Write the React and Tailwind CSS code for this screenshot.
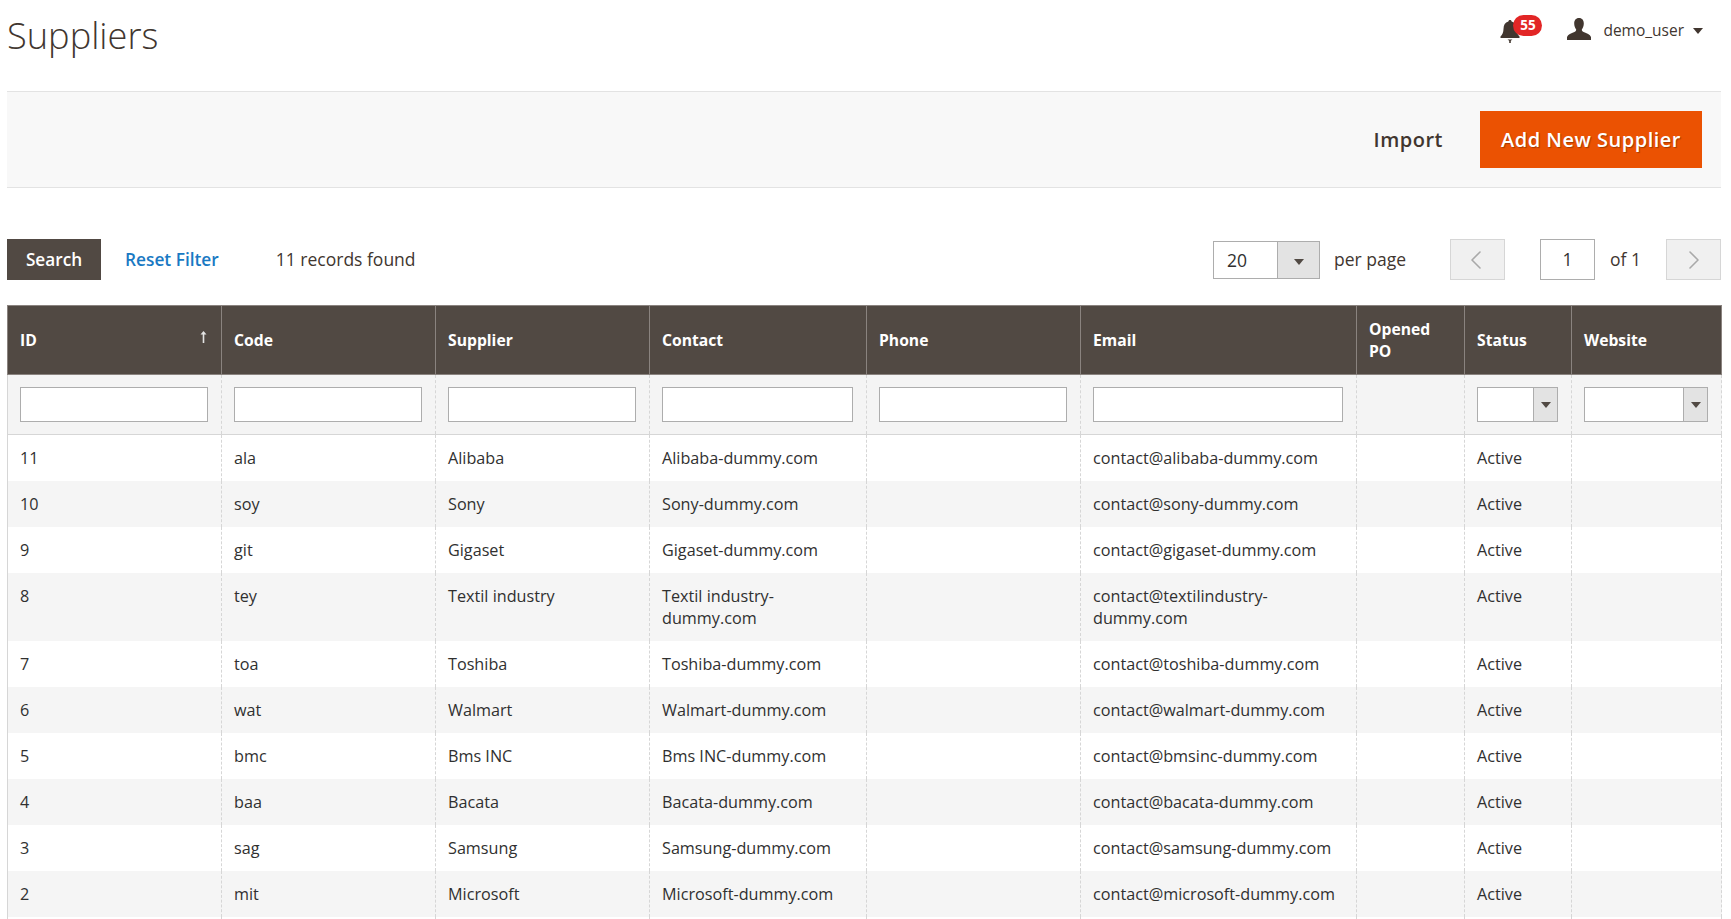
import { ChevronLeft, ChevronRight } from "lucide-react";

const rows = [
  ["11", "ala", "Alibaba", "Alibaba-dummy.com", "contact@alibaba-dummy.com"],
  ["10", "soy", "Sony", "Sony-dummy.com", "contact@sony-dummy.com"],
  ["9", "git", "Gigaset", "Gigaset-dummy.com", "contact@gigaset-dummy.com"],
  ["8", "tey", "Textil industry", "Textil industry-dummy.com", "contact@textilindustry-dummy.com"],
  ["7", "toa", "Toshiba", "Toshiba-dummy.com", "contact@toshiba-dummy.com"],
  ["6", "wat", "Walmart", "Walmart-dummy.com", "contact@walmart-dummy.com"],
  ["5", "bmc", "Bms INC", "Bms INC-dummy.com", "contact@bmsinc-dummy.com"],
  ["4", "baa", "Bacata", "Bacata-dummy.com", "contact@bacata-dummy.com"],
  ["3", "sag", "Samsung", "Samsung-dummy.com", "contact@samsung-dummy.com"],
  ["2", "mit", "Microsoft", "Microsoft-dummy.com", "contact@microsoft-dummy.com"],
];

const headers = ["ID", "Code", "Supplier", "Contact", "Phone", "Email", "Opened PO", "Status", "Website"];

function Caret({ className }) {
  return (
    <svg viewBox="0 0 10 6" className={className} fill="currentColor">
      <path d="M0 0h10L5 6z" />
    </svg>
  );
}

function FilterSelect() {
  return (
    <div className="flex h-[35px] border border-[#adadad] bg-white">
      <div className="flex-1" />
      <div className="flex w-[24px] items-center justify-center border-l border-[#adadad] bg-[#e3e3e3] text-[#514943]">
        <Caret className="h-[6px] w-[10px]" />
      </div>
    </div>
  );
}

function Cell({ children }) {
  return (
    <td className="border-r border-dashed border-[#d6d6d6] px-[12px] py-[12px] align-top leading-[22px]">
      {children}
    </td>
  );
}

export default function App() {
  return (
    <div className="h-screen overflow-hidden bg-white pl-[7px] pr-[10px] font-['Open_Sans',sans-serif] text-[16.2px] text-[#303030]">
      {/* Заголовок */}
      <div className="flex h-[91px] items-start justify-between">
        <h1 className="mt-[11px] text-[36.2px] font-light leading-[48px] text-[#41362f]">Suppliers</h1>
        <div className="mr-[18px] mt-[15px] flex items-center">
          <div className="relative mr-[47px] h-[28px] w-[20px]">
            <svg viewBox="0 0 20 23" className="absolute left-0 top-[5px] h-[23px] w-[20px] fill-[#41362f]">
              <path d="M10 0c1 0 1.600.7 1.600 1.600C15 2.400 16.400 5 16.500 9c.1 3.500 1 5.500 3 7.500V18H.500v-1.500c2-2 2.900-4 3-7.500C3.600 5 5 2.400 8.400 1.600 8.400.7 9 0 10 0z" />
              <path d="M7.500 19.500h5l-1.700 1.200V23H9.200v-2.300z" />
            </svg>
            <span className="absolute left-[13px] top-0 flex h-[21px] w-[29px] items-center justify-center rounded-full bg-[#e22626] text-[13.5px] font-bold leading-none text-white">
              55
            </span>
          </div>
          <svg viewBox="0 0 24 22" className="mr-[12px] h-[22px] w-[24px] fill-[#41362f]">
            <path d="M12 0c3.300 0 4.800 2.500 4.800 5.400 0 2.300-.8 4.500-2 6 0 1.300.5 2 1.800 2.600 3.300 1.400 6.400 2.400 7.400 5V22H0v-3c1-2.600 4.100-3.600 7.400-5 1.300-.6 1.800-1.300 1.800-2.600-1.200-1.500-2-3.700-2-6C7.200 2.500 8.700 0 12 0z" />
          </svg>
          <span className="pt-[4px] text-[15.5px] text-[#41362f]">demo_user</span>
          <Caret className="ml-[9px] mt-[4px] h-[6px] w-[10px] text-[#41362f]" />
        </div>
      </div>

      {/* Панель действий */}
      <div className="flex h-[97px] items-center justify-end border-y border-[#e3e3e3] bg-[#f8f8f8] pr-[19px]">
        <span className="mr-[37px] text-[20px] font-semibold tracking-[0.5px] text-[#41362f]">Import</span>
        <button className="h-[57px] w-[222px] bg-[#eb5202] text-[20px] font-semibold tracking-[0.5px] text-white [text-shadow:1px_1px_1px_rgba(0,0,0,0.3)]">
          Add New Supplier
        </button>
      </div>

      {/* Поиск и пагинация */}
      <div className="mb-[25px] mt-[51px] flex h-[41px] items-center text-[17.5px]">
        <button className="h-[41px] w-[94px] bg-[#514943] text-[17.2px] font-semibold text-white">Search</button>
        <a className="ml-[24px] text-[17.3px] font-semibold text-[#1979c3]">Reset Filter</a>
        <span className="ml-[57px] text-[#41362f]">11 records found</span>
        <div className="ml-auto flex items-center">
          <div className="flex h-[38px] w-[107px] border border-[#adadad]">
            <span className="flex-1 pl-[13px] leading-[36px]">20</span>
            <div className="flex w-[42px] items-center justify-center border-l border-[#adadad] bg-[#e3e3e3] pt-[5px] text-[#514943]">
              <Caret className="h-[6px] w-[10px]" />
            </div>
          </div>
          <span className="ml-[14px] text-[#41362f]">per page</span>
          <button className="ml-[44px] flex h-[41px] w-[55px] items-center justify-center border border-[#d6d6d6] bg-[#f0f0f0] pr-[3px] text-[#a9a9a9]">
            <ChevronLeft size={32} strokeWidth={1.2} />
          </button>
          <div className="ml-[35px] flex h-[41px] w-[55px] items-center justify-center border border-[#adadad] text-[#303030]">1</div>
          <span className="ml-[15px] text-[#41362f]">of 1</span>
          <button className="ml-[25px] flex h-[41px] w-[55px] items-center justify-center border border-[#d6d6d6] bg-[#f0f0f0] text-[#a9a9a9]">
            <ChevronRight size={32} strokeWidth={1.2} />
          </button>
        </div>
      </div>

      {/* Таблица */}
      <table className="w-full table-fixed border-collapse border-l border-[#d6d6d6] text-left">
        <colgroup>
          <col className="w-[214px]" />
          <col className="w-[214px]" />
          <col className="w-[214px]" />
          <col className="w-[217px]" />
          <col className="w-[214px]" />
          <col className="w-[276px]" />
          <col className="w-[108px]" />
          <col className="w-[107px]" />
          <col className="w-[150px]" />
        </colgroup>
        <thead>
          <tr className="h-[69px] bg-[#514943] text-white">
            {headers.map((h, i) => (
              <th
                key={h}
                className="relative border border-[#8a837f] px-[12px] align-middle text-[15.7px] font-bold leading-[22px]"
              >
                {h}
                {i === 0 && (
                  <svg viewBox="0 0 7 12" className="absolute right-[14px] top-[25px] h-[12px] w-[7px] fill-[#e3e3e3]">
                    <path d="M3.500 0 6.500 3.500H4.300V12H2.700V3.500H.5z" />
                  </svg>
                )}
              </th>
            ))}
          </tr>
          <tr className="h-[60px] border-b border-[#d6d6d6] bg-[#f4f4f4]">
            {headers.map((h, i) => (
              <td key={h} className="border-r border-dashed border-[#d6d6d6] pl-[12px] pr-[13px]">
                {i < 6 && <input className="block h-[35px] w-full border border-[#adadad] bg-white" />}
                {i > 6 && <FilterSelect />}
              </td>
            ))}
          </tr>
        </thead>
        <tbody>
          {rows.map((r, i) => (
            <tr key={r[0]} className={i % 2 ? "bg-[#f5f5f5]" : "bg-white"}>
              <Cell>{r[0]}</Cell>
              <Cell>{r[1]}</Cell>
              <Cell>{r[2]}</Cell>
              <Cell>{r[3]}</Cell>
              <Cell />
              <Cell>{r[4]}</Cell>
              <Cell />
              <Cell>Active</Cell>
              <Cell />
            </tr>
          ))}
          <tr className="h-[46px] bg-white">
            {headers.map((h) => (
              <td key={h} className="border-r border-dashed border-[#d6d6d6]" />
            ))}
          </tr>
        </tbody>
      </table>
    </div>
  );
}
